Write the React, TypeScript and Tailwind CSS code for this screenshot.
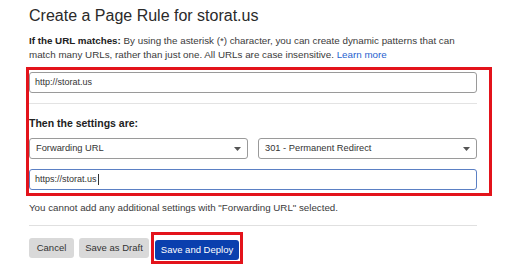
import React from "react";

function Caret() {
  return (
    <svg width="7" height="4" viewBox="0 0 7 4" className="shrink-0">
      <path d="M0 0 L7 0 L3.5 4 Z" fill="#555" />
    </svg>
  );
}

function Select({ value }: { value: string }) {
  return (
    <div className="flex h-[21px] flex-1 items-center justify-between rounded-[3px] border border-[#9a9a9a] bg-white pl-[6px] pr-[6px] text-[9.3px] text-[#333]">
      <span>{value}</span>
      <Caret />
    </div>
  );
}

export default function App() {
  return (
    <div
      className="h-[266px] w-[531px] overflow-hidden bg-white text-[#333]"
      style={{ fontFamily: "'Liberation Sans', Arial, sans-serif" }}
    >
      <div className="ml-[29px] w-[448px] pt-[6px]">
        <h1 className="text-[16px] leading-[20px] text-[#2a2a2a]">
          Create a Page Rule for storat.us
        </h1>

        <p className="mt-[8px] text-[9.8px] leading-[14px] text-[#3a3a3a]">
          <span className="font-bold text-[#222]">If the URL matches:</span> By using the
          asterisk (*) character, you can create dynamic patterns that can match many URLs,
          rather than just one. All URLs are case insensitive.{" "}
          <span className="text-[#1f5fcf]">Learn more</span>
        </p>

        {/* highlighted settings block */}
        <div className="-ml-[3px] mt-[5px] w-[466px] border-[3px] border-[#e3131b] pb-[3px] pr-[12px] pt-[2px]">
          <div className="flex h-[21px] items-center rounded-[3px] border border-[#9a9a9a] pl-[5px] text-[9px] text-[#333]">
            http://storat.us
          </div>

          <div className="mt-[10px] h-px bg-[#e3e3e3]" />

          <div className="mt-[12px] text-[10.5px] font-bold leading-[14px] text-[#222]">
            Then the settings are:
          </div>

          <div className="mt-[8px] flex gap-[10px]">
            <Select value="Forwarding URL" />
            <Select value="301 - Permanent Redirect" />
          </div>

          <div className="mt-[10px] flex h-[21px] items-center rounded-[3px] border border-[#5b80c4] pl-[5px] text-[9px] text-[#333]">
            https://storat.us
            <span className="ml-px inline-block h-[11px] w-px bg-[#333]" />
          </div>
        </div>

        <p className="mt-[5px] text-[9.75px] leading-[14px] text-[#3a3a3a]">
          You cannot add any additional settings with "Forwarding URL" selected.
        </p>

        <div className="mt-[10px] h-px bg-[#e0e0e0]" />

        <div className="mt-[6px] flex items-center gap-[5px]">
          <button className="h-[20px] w-[45px] rounded-[3px] bg-[#d9d9d9] text-[9.5px] text-[#333]">
            Cancel
          </button>
          <button className="h-[20px] w-[70px] rounded-[3px] bg-[#d9d9d9] text-[9.5px] text-[#333]">
            Save as Draft
          </button>
          <div className="-ml-[3px] border-[3px] border-[#e3131b] p-px">
            <button className="h-[20px] w-[84px] rounded-[3px] bg-[#0a3fae] text-[9.5px] text-white">
              Save and Deploy
            </button>
          </div>
        </div>
      </div>
    </div>
  );
}
